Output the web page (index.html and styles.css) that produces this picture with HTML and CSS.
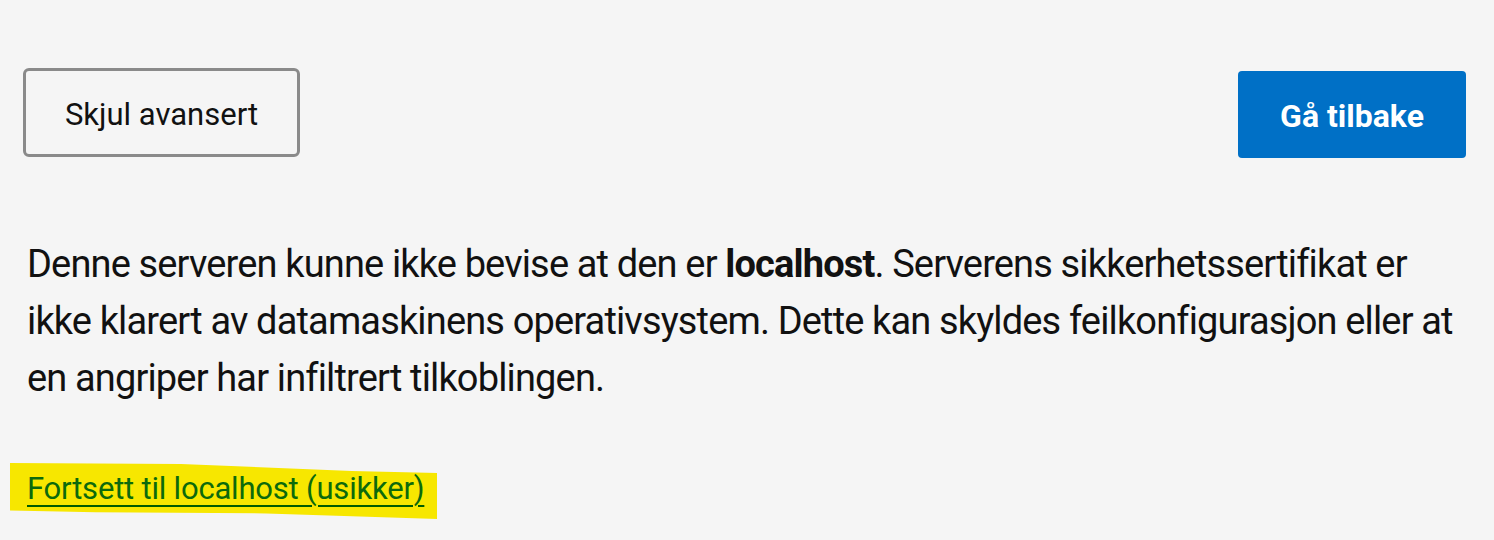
FILE: index.html
```html
<!DOCTYPE html>
<html lang="no">
<head>
<meta charset="utf-8">
<title>Personvernfeil</title>
<link rel="stylesheet" href="styles.css">
</head>
<body>
<main class="page">
  <div class="actions">
    <button class="btn btn-secondary" type="button">Skjul avansert</button>
    <button class="btn btn-primary" type="button">Gå tilbake</button>
  </div>
  <p class="details">Denne serveren kunne ikke bevise at den er <strong>localhost</strong>. Serverens sikkerhetssertifikat er ikke klarert av datamaskinens operativsystem. Dette kan skyldes feilkonfigurasjon eller at en angriper har infiltrert tilkoblingen.</p>
  <p class="proceed"><span class="marker"><a class="proceed-link" href="#">Fortsett til localhost (usikker)</a></span></p>
</main>
</body>
</html>
```

FILE: styles.css
```css
html, body {
  margin: 0;
  padding: 0;
  background: #f5f5f5;
}

body {
  font-family: Roboto, "Open Sans", sans-serif;
  color: #111111;
}

.page {
  padding: 68px 28px 0 27px;
}

.actions {
  display: flex;
  justify-content: space-between;
  align-items: flex-start;
}

.btn {
  font-family: inherit;
  cursor: pointer;
  box-sizing: border-box;
  padding: 3px 0 0 0;
}

.btn-secondary {
  margin-left: -4px;
  width: 277px;
  height: 89px;
  border: 3px solid #8a8a8a;
  border-radius: 6px;
  background: #f5f5f5;
  color: #111111;
  font-size: 31px;
  font-weight: 400;
}

.btn-primary {
  margin-top: 3px;
  width: 228px;
  height: 87px;
  border: none;
  border-radius: 4px;
  background: #0070c6;
  color: #ffffff;
  font-size: 32px;
  font-weight: 700;
}

.details {
  margin: 78px -6px 0 0;
  font-size: 38px;
  letter-spacing: -0.85px;
  line-height: 57px;
}

.details strong {
  font-weight: 700;
}

.proceed {
  margin: 56px 0 0 0;
  font-size: 31px;
  letter-spacing: -0.2px;
  line-height: 48px;
}

.marker {
  display: inline-block;
  margin-left: -17px;
  padding: 2px 13px 6px 17px;
  background: #f7e700;
  clip-path: polygon(0 0, 40% 1px, 80% 8px, 100% 10px, 100% 100%, 60% 90%, 20% 88%, 0 85%);
}

.proceed-link {
  color: #0c6a0c;
  text-decoration: underline;
  text-decoration-color: #005c00;
  text-decoration-thickness: 2px;
  text-underline-offset: 6px;
}
```
